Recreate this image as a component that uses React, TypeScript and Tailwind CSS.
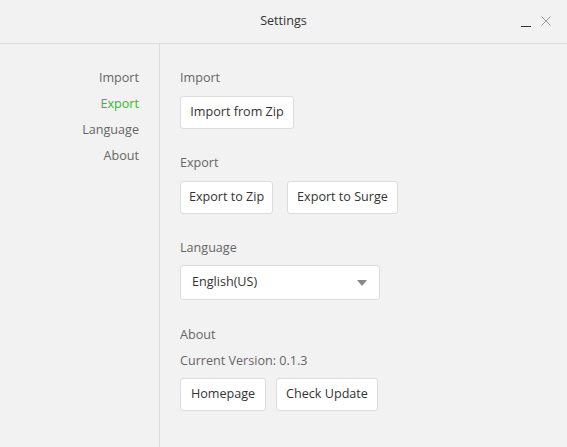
import React from "react";

const font = { fontFamily: '"Open Sans", "Noto Sans", sans-serif' };

function Btn({ children, w }: { children: React.ReactNode; w: string }) {
  return (
    <button
      className={`h-[33px] ${w} bg-white border border-[#dcdcdc] rounded-[3px] text-[12.6px] text-[#333] flex items-center justify-center`}
    >
      {children}
    </button>
  );
}

export default function App() {
  return (
    <div
      className="w-[567px] h-[447px] bg-[#f2f2f2] flex flex-col overflow-hidden text-[12.6px]"
      style={font}
    >
      <div className="h-[44px] shrink-0 relative flex items-center justify-center border-b border-[#dcdcdc]">
        <span className="text-[#333]">Settings</span>
        <div className="absolute right-[16px] top-[16px] flex items-start gap-[10px]">
          <div className="w-[10px] h-[1px] bg-[#333] mt-[10px]" />
          <svg width="10" height="10" viewBox="0 0 10 10">
            <path d="M0.5 0.5 L9.5 9.5 M9.5 0.5 L0.5 9.5" stroke="#999" strokeWidth="1" />
          </svg>
        </div>
      </div>
      <div className="flex flex-1">
        <div className="w-[160px] shrink-0 border-r border-[#dcdcdc] flex flex-col items-end pr-[20px] pt-[24px] gap-[7px] text-[#666]">
          <div className="h-[19px] leading-[19px]">Import</div>
          <div className="h-[19px] leading-[19px] text-[#1fc21f]">Export</div>
          <div className="h-[19px] leading-[19px]">Language</div>
          <div className="h-[19px] leading-[19px]">About</div>
        </div>
        <div className="flex-1 pl-[20px] pt-[24px] flex flex-col text-[#666]">
          <div className="h-[19px] leading-[19px]">Import</div>
          <div className="mt-[9px] flex">
            <Btn w="w-[114px]">Import from Zip</Btn>
          </div>
          <div className="mt-[24px] h-[19px] leading-[19px]">Export</div>
          <div className="mt-[9px] flex gap-[14px]">
            <Btn w="w-[93px]">Export to Zip</Btn>
            <Btn w="w-[111px]">Export to Surge</Btn>
          </div>
          <div className="mt-[24px] h-[19px] leading-[19px]">Language</div>
          <div className="mt-[8px] w-[200px] h-[35px] bg-white border border-[#dcdcdc] rounded-[3px] flex items-center justify-between pl-[11px] pr-[12px] text-[#333]">
            <span>English(US)</span>
            <svg width="10" height="6" viewBox="0 0 10 6">
              <path d="M0 0 L10 0 L5 6 Z" fill="#888" />
            </svg>
          </div>
          <div className="mt-[25px] h-[19px] leading-[19px]">About</div>
          <div className="mt-[7px] h-[19px] leading-[19px]">Current Version: 0.1.3</div>
          <div className="mt-[8px] flex gap-[10px]">
            <Btn w="w-[86px]">Homepage</Btn>
            <Btn w="w-[102px]">Check Update</Btn>
          </div>
        </div>
      </div>
    </div>
  );
}
